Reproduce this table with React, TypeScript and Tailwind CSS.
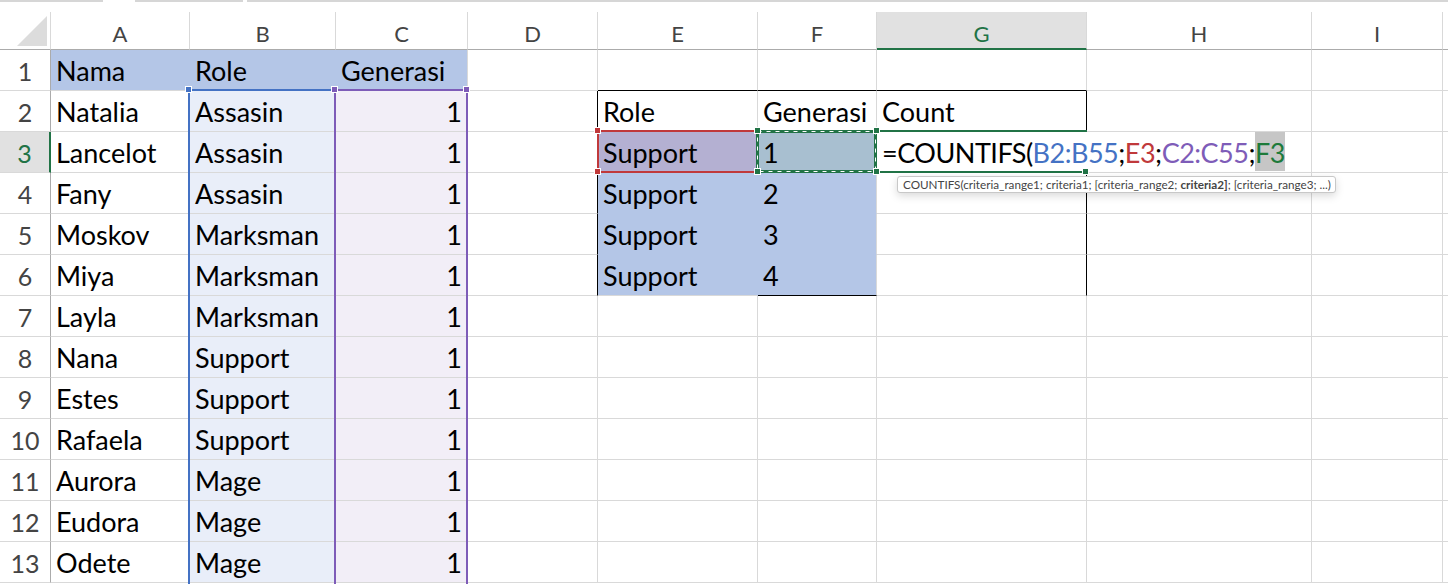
import React from 'react';

declare module 'react/jsx-runtime' {
  export function jsx(type: any, props?: any, key?: any): any;
  export function jsxs(type: any, props?: any, key?: any): any;
  export function jsxDEV(type: any, props?: any, key?: any): any;
}

declare global {
  namespace JSX {
    interface IntrinsicElements {
      [elemName: string]: any;
    }
  }
}

const font = { fontFamily: 'Lato, "Open Sans", sans-serif' };

// column widths include the right gridline
const COLS = [
  { label: 'A', w: 'w-[139px]' },
  { label: 'B', w: 'w-[146px]' },
  { label: 'C', w: 'w-[132px]' },
  { label: 'D', w: 'w-[130px]' },
  { label: 'E', w: 'w-[160px]' },
  { label: 'F', w: 'w-[119px]' },
  { label: 'G', w: 'w-[210px]' },
  { label: 'H', w: 'w-[225px]' },
  { label: 'I', w: 'w-[131px]' },
  { label: '', w: 'w-[6px]' },
];

const ROWS: (string | number)[][] = [
  ['Nama', 'Role', 'Generasi'],
  ['Natalia', 'Assasin', 1, '', 'Role', 'Generasi', 'Count'],
  ['Lancelot', 'Assasin', 1, '', 'Support', '1'],
  ['Fany', 'Assasin', 1, '', 'Support', '2'],
  ['Moskov', 'Marksman', 1, '', 'Support', '3'],
  ['Miya', 'Marksman', 1, '', 'Support', '4'],
  ['Layla', 'Marksman', 1],
  ['Nana', 'Support', 1],
  ['Estes', 'Support', 1],
  ['Rafaela', 'Support', 1],
  ['Aurora', 'Mage', 1],
  ['Eudora', 'Mage', 1],
  ['Odete', 'Mage', 1],
];

const bgFor = (r: number, c: number) => {
  if (r === 1 && c <= 2) return 'bg-[#b4c6e7]';
  if (r >= 2 && c === 1) return 'bg-[#e9eef9]';
  if (r >= 2 && c === 2) return 'bg-[#f2eef7]';
  if (r === 3 && c === 4) return 'bg-[#b4b0d2]';
  if (r === 3 && c === 5) return 'bg-[#a8bfd0]';
  if (r >= 4 && r <= 6 && (c === 4 || c === 5)) return 'bg-[#b4c6e7]';
  return 'bg-white';
};

const rightFor = (r: number, c: number) => {
  if (r === 1 && (c === 0 || c === 1)) return 'border-r-[#b4c6e7]';
  if (r >= 2 && r <= 6 && (c === 3 || c === 6)) return 'border-r-black';
  if (r >= 3 && r <= 6 && c === 4) return 'border-r-[#b4c6e7]';
  return 'border-r-[#d9d9d9]';
};

const bottomFor = (r: number, c: number) => {
  if (r === 1 && c >= 4 && c <= 6) return 'border-b-black';
  if (r === 6 && c === 5) return 'border-b-black';
  if (r >= 3 && r <= 5 && (c === 4 || c === 5)) return 'border-b-[#b4c6e7]';
  return 'border-b-[#d9d9d9]';
};

const Handle = ({ className }: { className: string }) => (
  <div className={`absolute w-[7px] h-[7px] border border-white ${className}`} />
);

const App: React.FC = () => {
  return (
    <div className="relative w-[1448px] h-[584px] overflow-hidden bg-white text-black" style={font}>
      {/* strip left from the ribbon above */}
      <div className="flex h-[12px]">
        <div className="w-[103px] h-[2px] bg-[#d6d6d6]" />
        <div className="w-[32px]" />
        <div className="w-[108px] h-[2px] bg-[#d6d6d6]" />
        <div className="w-[4px]" />
        <div className="flex-1 h-[2px] bg-[#d6d6d6]" />
      </div>

      {/* column headers */}
      <div className="flex h-[38px] text-[22px] text-[#444]">
        <div className="w-[51px] shrink-0 border-r border-b border-r-[#d9d9d9] border-b-[#ababab] box-border flex items-end justify-end pr-[2px] pb-[2px]">
          <svg width="32" height="32" viewBox="0 0 32 32">
            <polygon points="31,1 31,31 1,31" fill="#dcdcdc" />
          </svg>
        </div>
        {COLS.map((col) =>
          col.label === 'G' ? (
            <div
              key={col.label}
              className={`${col.w} shrink-0 box-border border-r border-b-2 border-r-[#d9d9d9] border-b-[#217346] bg-[#e1e1e1] text-[#217346] text-center leading-[44px]`}
            >
              {col.label}
            </div>
          ) : (
            <div
              key={col.label || 'x'}
              className={`${col.w} shrink-0 box-border border-r border-b border-r-[#d9d9d9] border-b-[#ababab] text-center leading-[44px]`}
            >
              {col.label}
            </div>
          )
        )}
      </div>

      {/* rows */}
      {ROWS.map((row, i) => {
        const r = i + 1;
        return (
          <div key={r} className="flex h-[41px] text-[27px]">
            {r === 3 ? (
              <div className="w-[51px] shrink-0 box-border border-r-2 border-b border-r-[#217346] border-b-[#d9d9d9] bg-[#e1e1e1] text-[#217346] text-center text-[25px] leading-[42px]">
                {r}
              </div>
            ) : (
              <div className="w-[51px] shrink-0 box-border border-r border-b border-r-[#ababab] border-b-[#d9d9d9] text-[#444] text-center text-[25px] leading-[42px]">
                {r}
              </div>
            )}
            {COLS.map((col, c) => {
              const v = row[c];
              const isNum = typeof v === 'number';
              return (
                <div
                  key={c}
                  className={`${col.w} shrink-0 box-border border-r border-b whitespace-nowrap overflow-hidden leading-[42px] ${bgFor(r, c)} ${rightFor(r, c)} ${bottomFor(r, c)} ${isNum ? 'text-right pr-[5px]' : 'pl-[5px]'}`}
                >
                  {v}
                </div>
              );
            })}
          </div>
        );
      })}

      {/* range highlights for the formula being edited */}
      <div className="absolute left-[188px] top-[89px] w-[148px] h-[520px] border-2 border-[#4472c4]" />
      <div className="absolute left-[334px] top-[89px] w-[134px] h-[520px] border-2 border-[#7e5cb8]" />
      <Handle className="left-[185px] top-[86px] bg-[#4472c4]" />
      <Handle className="left-[331px] top-[86px] bg-[#7e5cb8]" />
      <Handle className="left-[463px] top-[86px] bg-[#7e5cb8]" />

      <div className="absolute left-[597px] top-[130px] w-[161px] h-[43px] border-2 border-[#c0393b]" />
      <Handle className="left-[594px] top-[127px] bg-[#c0393b]" />
      <Handle className="left-[594px] top-[168px] bg-[#c0393b]" />

      {/* cell being edited */}
      <div className="absolute left-[877px] top-[132px] w-[413px] h-[39px] bg-white flex items-stretch pl-[5px] text-[27px] leading-[41px] tracking-[-0.5px] whitespace-nowrap">
        <span>=COUNTIFS(</span>
        <span className="text-[#4472c4]">B2:B55</span>
        <span>;</span>
        <span className="text-[#c0393b]">E3</span>
        <span>;</span>
        <span className="text-[#7e5cb8]">C2:C55</span>
        <span>;</span>
        <span className="text-[#1d7a3a] bg-[#c6c6c6]">F3</span>
      </div>
      <div className="absolute left-[876px] top-[130px] w-[211px] h-[2px] bg-[#217346]" />
      <div className="absolute left-[876px] top-[171px] w-[211px] h-[2px] bg-[#217346]" />
      <Handle className="left-[1082px] top-[168px] bg-[#217346]" />

      {/* copy marquee on F3 */}
      <svg className="absolute left-[755px] top-[129px]" width="123" height="45">
        <rect x="2.5" y="2.5" width="118" height="40" fill="none" stroke="#217346" strokeWidth="3" />
        <rect x="2.5" y="2.5" width="118" height="40" fill="none" stroke="#ffffff" strokeWidth="1" strokeDasharray="4 5" />
      </svg>
      <Handle className="left-[754px] top-[127px] bg-[#217346]" />
      <Handle className="left-[873px] top-[127px] bg-[#217346]" />
      <Handle className="left-[754px] top-[168px] bg-[#217346]" />
      <Handle className="left-[873px] top-[168px] bg-[#217346]" />

      {/* function tooltip */}
      <div className="absolute left-[897px] top-[176px] w-[439px] h-[17px] bg-white border border-[#c8c8c8] rounded-[3px] shadow-[0_3px_8px_rgba(0,0,0,0.15)] pl-[5px] text-[11.7px] leading-[15px] text-[#444] whitespace-nowrap">
        COUNTIFS(criteria_range1; criteria1; [criteria_range2; <b className="font-bold">criteria2]</b>; [criteria_range3; ...)
      </div>
    </div>
  );
};

export default App;
